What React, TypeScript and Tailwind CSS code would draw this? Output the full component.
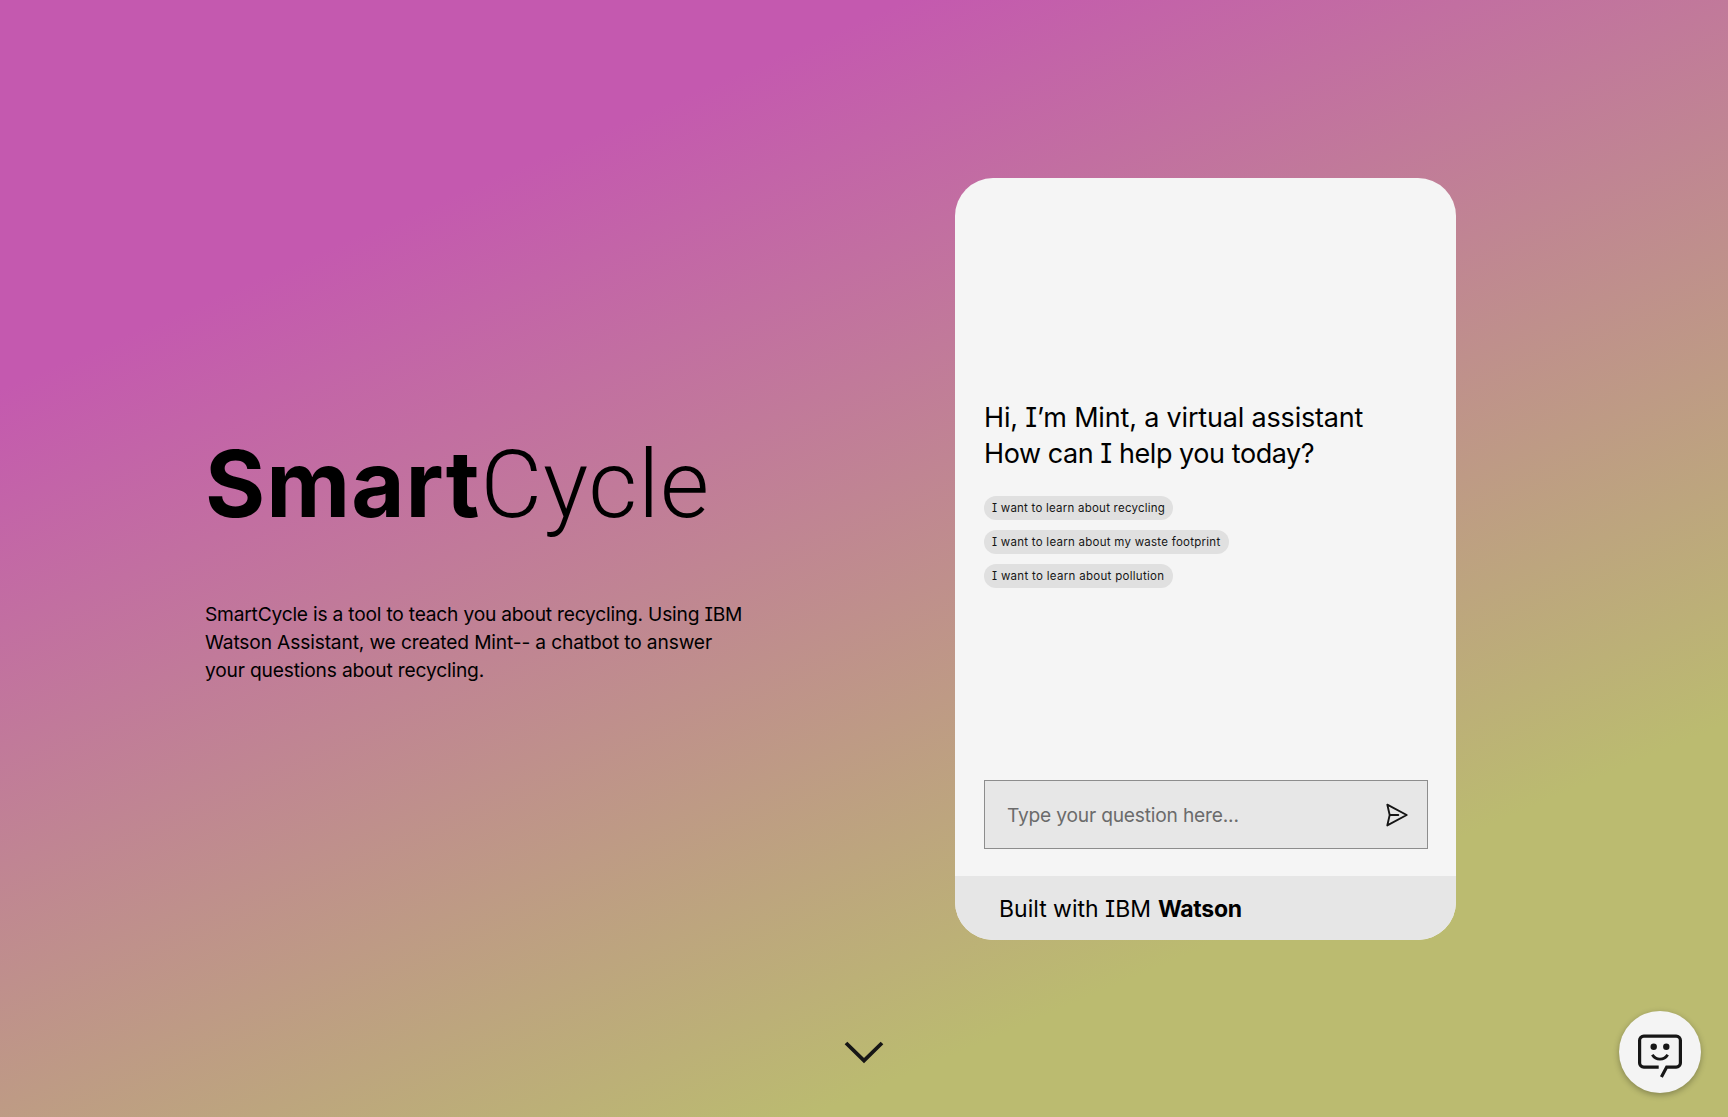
const suggestions = [
  { text: "I want to learn about recycling", className: "w-[189px] tracking-[0.23px]" },
  { text: "I want to learn about my waste footprint", className: "w-[245px] tracking-[0.26px]" },
  { text: "I want to learn about pollution", className: "w-[189px] tracking-[0.3px]" },
];

function SendIcon() {
  return (
    <svg
      className="h-[26px] w-[26px]"
      viewBox="0 0 26 26"
      fill="none"
      stroke="#161616"
      strokeWidth="1.9"
      strokeLinejoin="round"
      strokeLinecap="round"
      aria-hidden="true"
    >
      <path d="M3.3 2.6 L22.7 13 L3.3 23.4 L5.7 13 Z M5.7 13 H14.3" />
    </svg>
  );
}

function BotIcon() {
  return (
    <svg
      className="h-12 w-12"
      viewBox="0 0 48 48"
      fill="none"
      stroke="#161616"
      strokeWidth="3.2"
      aria-hidden="true"
    >
      <path d="M22.7 36.1 H7.8 A4.2 4.2 0 0 1 3.6 31.9 V9.3 A4.2 4.2 0 0 1 7.8 5.1 H40.2 A4.2 4.2 0 0 1 44.4 9.3 V31.9 A4.2 4.2 0 0 1 40.2 36.1 H30.7 L25.4 46" />
      <circle cx="17.7" cy="15.7" r="3.2" fill="#161616" stroke="none" />
      <circle cx="30.3" cy="15.7" r="3.2" fill="#161616" stroke="none" />
      <path d="M16.3 23.8 C19.8 29.6 28.2 29.6 31.7 23.8" strokeWidth="2.8" />
    </svg>
  );
}

function ChatCard() {
  return (
    <section className="flex h-[762px] w-[501px] shrink-0 flex-col overflow-hidden rounded-[38px] bg-[#f5f5f5]">
      <div className="flex-1 pr-7 pl-[29px] pt-[222px]">
        <h2 className="text-[27px] leading-9 whitespace-nowrap">
          <span className="block tracking-[-0.18px]">Hi, I’m Mint, a virtual assistant</span>
          <span className="block tracking-[-0.44px]">How can I help you today?</span>
        </h2>
        <div className="mt-6 flex flex-col items-start gap-2.5">
          {suggestions.map((s) => (
            <button
              key={s.text}
              className={`h-6 rounded-full bg-[#e0e0e0] pl-2 text-left text-[11.5px] leading-6 whitespace-nowrap text-[#161616] ${s.className}`}
            >
              {s.text}
            </button>
          ))}
        </div>
        <div className="mt-48 flex h-[69px] w-[444px] items-center justify-between border border-[#8d8d8d] bg-[#e7e7e7] pr-[17px] pl-[22px]">
          <span className="pt-0.5 text-[19.2px] tracking-[-0.2px] text-[#6b6b6b]">
            Type your question here...
          </span>
          <SendIcon />
        </div>
      </div>
      <footer className="flex h-16 items-center bg-[#e6e6e6] pt-0.5 pl-11 text-[23px] leading-8">
        <span>Built with IBM</span>
        <span className="ml-[7px] font-bold tracking-[-0.3px]">Watson</span>
      </footer>
    </section>
  );
}

export default function App() {
  return (
    <main className="relative h-[1117px] w-[1728px] overflow-hidden bg-[linear-gradient(156.8deg,#c459af_20.9%,#bbbb70_78.8%)] font-[Inter,sans-serif] text-black [font-feature-settings:'cv08']">
      <div className="flex pt-[178px] pl-[205px]">
        <section className="w-[750px] shrink-0 pt-[258px]">
          <h1 className="flex h-24 items-baseline text-[92px] leading-24 whitespace-nowrap">
            <span className="font-bold tracking-[1px]">Smart</span>
            <span className="font-[Roboto] text-[95px] font-light tracking-[0.7px]">
              Cycle
            </span>
          </h1>
          <p className="mt-[68px] text-[19.2px] leading-7 whitespace-nowrap">
            <span className="block tracking-[-0.21px]">
              SmartCycle is a tool to teach you about recycling. Using IBM
            </span>
            <span className="block tracking-[-0.15px]">
              Watson Assistant, we created Mint-- a chatbot to answer
            </span>
            <span className="block tracking-[-0.18px]">your questions about recycling.</span>
          </p>
        </section>
        <ChatCard />
      </div>

      <div className="flex justify-center pt-[100px]">
        <svg
          className="h-6 w-10"
          viewBox="0 0 40 24"
          fill="none"
          stroke="#161616"
          strokeWidth="3.8"
          aria-hidden="true"
        >
          <path d="M2 3 L20 20.6 L38 3" strokeLinejoin="miter" />
        </svg>
      </div>

      <button
        aria-label="Open chat"
        className="absolute right-[27px] bottom-6 flex h-[82px] w-[82px] items-center justify-center rounded-full bg-[#f4f4f4] pt-1.5 shadow-[0_2px_6px_rgba(0,0,0,0.3)]"
      >
        <BotIcon />
      </button>
    </main>
  );
}
